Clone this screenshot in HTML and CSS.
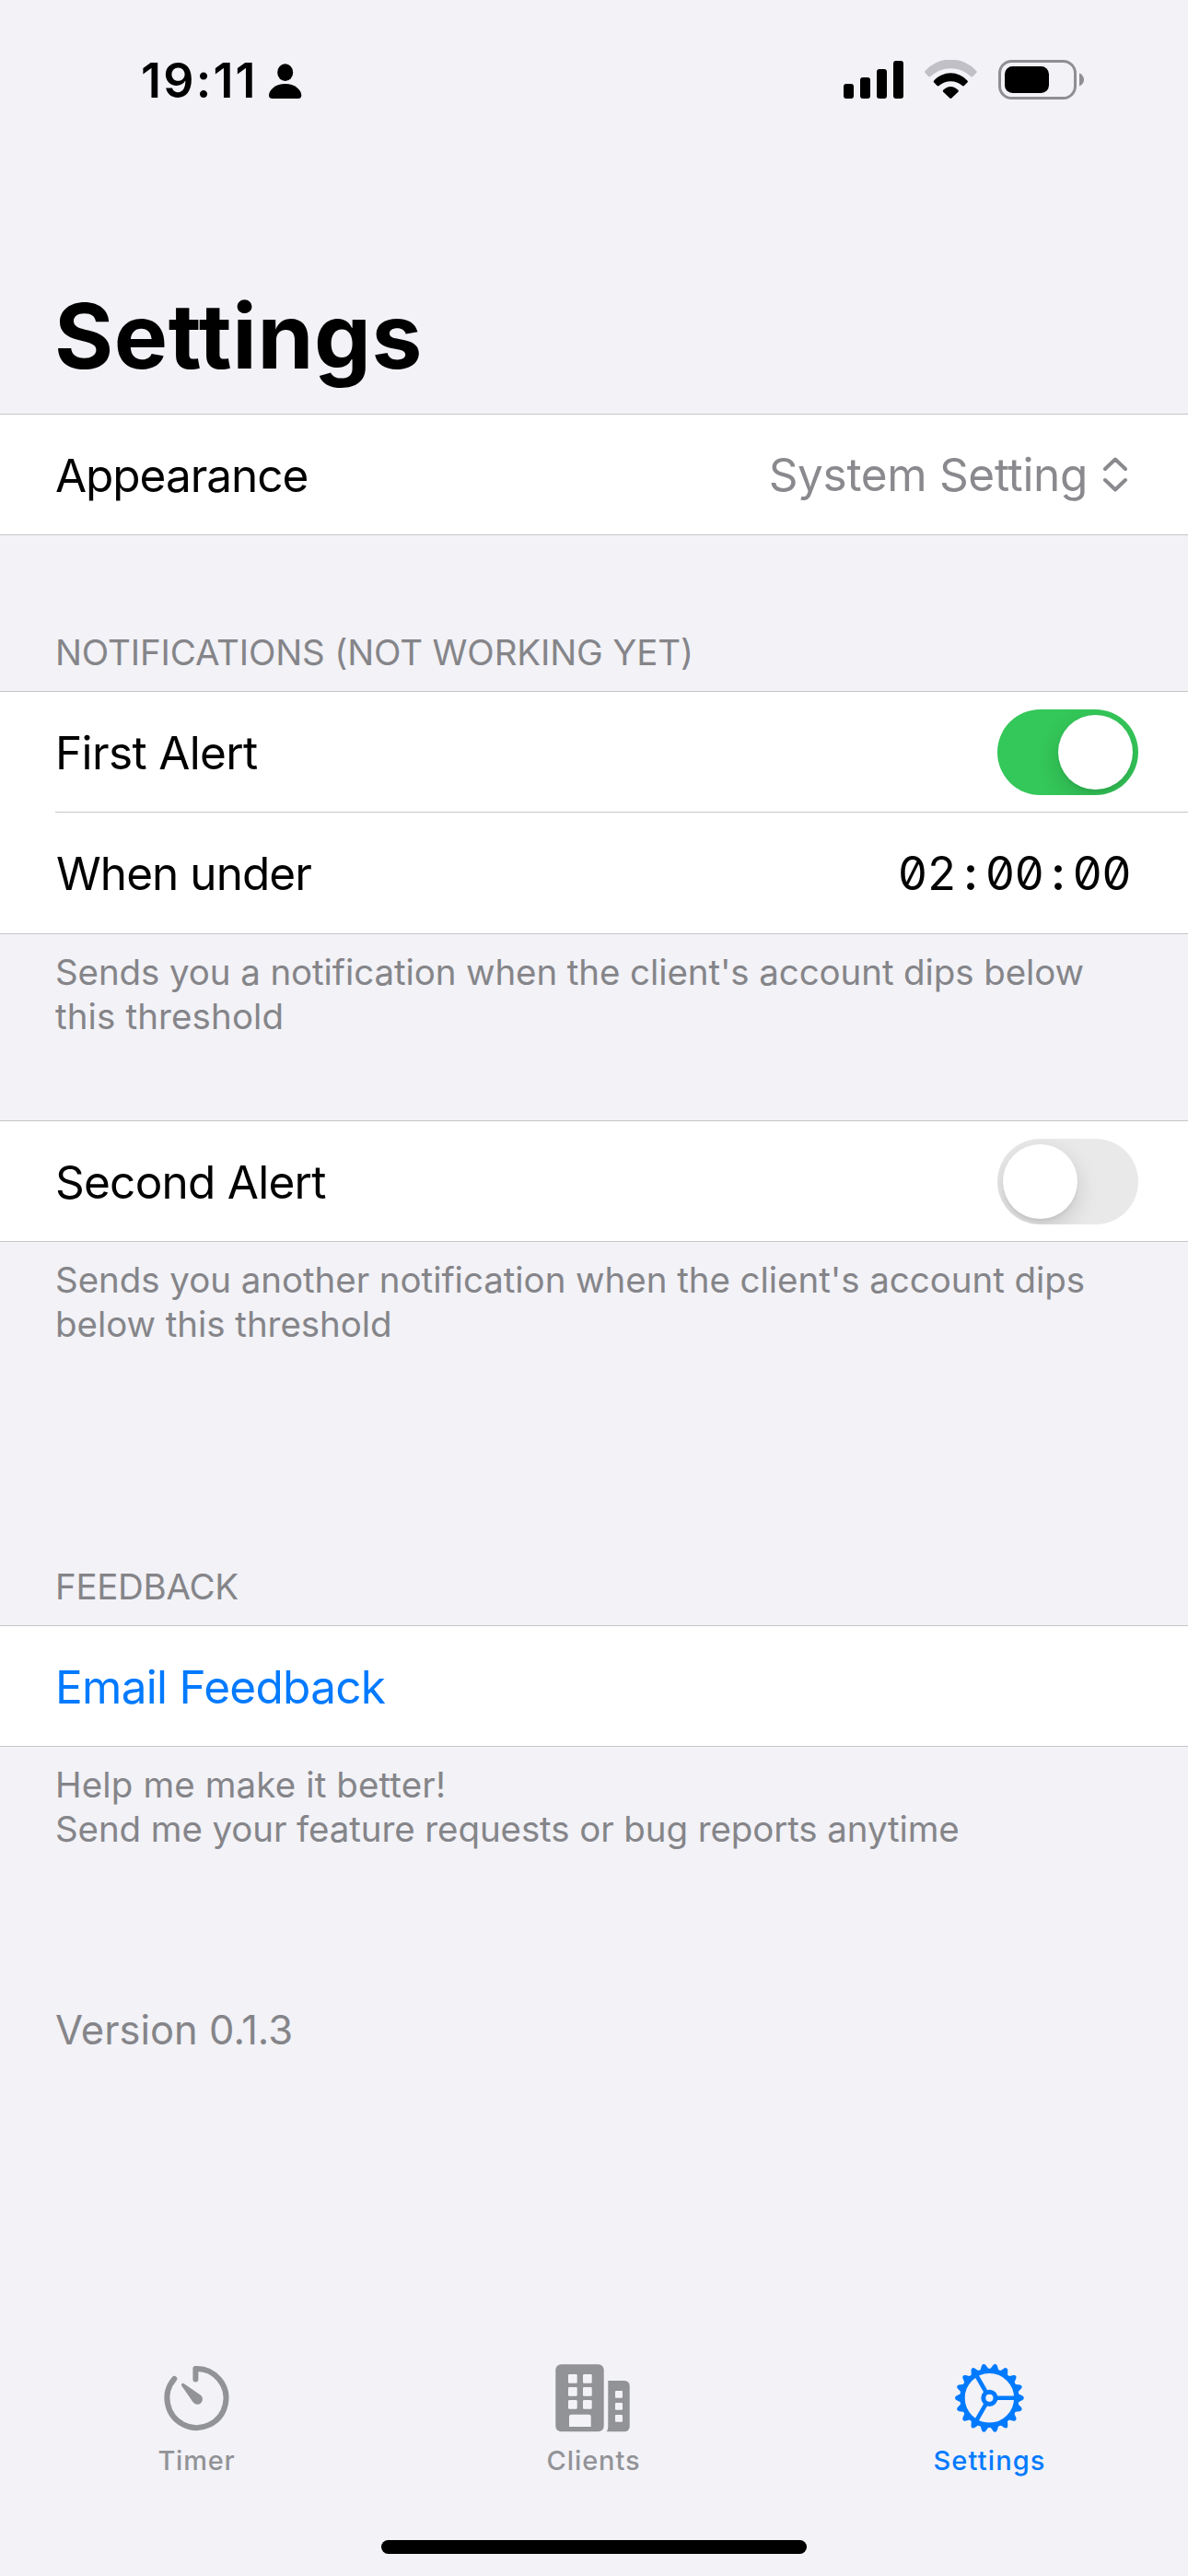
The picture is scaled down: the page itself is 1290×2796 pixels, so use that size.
FILE: index.html
```html
<!DOCTYPE html>
<html lang="en">
<head>
<meta charset="utf-8">
<title>Settings</title>
<link rel="stylesheet" href="styles.css">
</head>
<body>
<div class="screen">
  <header class="status">
    <div class="status-left">
      <span class="clock">19:11</span>
      <svg class="person" width="36" height="38" viewBox="0 0 36 38"><ellipse cx="17.7" cy="9.7" rx="8.5" ry="9.4"/><path d="M17.7 22C28 22 35.3 28.5 35.3 34.5C35.3 37 34 38 31.5 38H4C1.3 38 0 37 0 34.5C0 28.5 7.5 22 17.7 22Z"/></svg>
    </div>
    <div class="status-right">
      <svg width="65" height="43" viewBox="0 0 65 43"><rect x="0" y="26" width="11" height="16" rx="3"/><rect x="18" y="19" width="11" height="23" rx="3"/><rect x="36" y="10" width="11" height="32" rx="3"/><rect x="54" y="1" width="11" height="41" rx="3"/></svg>
      <svg width="57" height="43" viewBox="0 0 57 43"><path fill="#c1c0c6" d="M.5 12A37.3 37.3 0 0 1 56.2 12Q57.3 13 56.2 14L52.4 18Q51.3 18.9 50.2 18A31.9 31.9 0 0 0 6.4 18Q5.3 18.9 4.2 18L.5 14Q-.6 13 .5 12Z"/><path d="M10.2 22.4A24.4 24.4 0 0 1 46.4 22.4Q47.4 23.4 46.4 24.4L43 28Q42 28.8 41 28A19.3 19.3 0 0 0 15.6 28Q14.6 28.8 13.6 28L10.2 24.4Q9.2 23.4 10.2 22.4Z"/><path d="M20.2 32.8C25 27.7 31.6 27.7 36.4 32.8Q37.4 33.8 36.4 34.8L29.3 41.6Q28.3 42.5 27.3 41.6L20.2 34.8Q19.2 33.8 20.2 32.8Z"/></svg>
      <svg width="93" height="43" viewBox="0 0 93 43"><rect x="1.5" y="1.5" width="82" height="40" rx="13" fill="none" stroke="#8f8f92" stroke-width="3"/><rect x="7" y="7" width="48" height="29" rx="8.5"/><path fill="#8f8f92" d="M88 14.5C94.7 17 94.7 26 88 28.5Z"/></svg>
    </div>
  </header>

  <h1 class="title">Settings</h1>

  <main>
    <section class="group">
      <div class="row picker">
        <span class="label appearance">Appearance</span>
        <span class="value">System Setting</span>
        <svg width="26" height="38" viewBox="0 0 26 38" fill="none" stroke="#8a8a8e" stroke-width="4" stroke-linecap="round" stroke-linejoin="round"><path d="M2 13L13 2.5L24 13M2 25L13 35.5L24 25"/></svg>
      </div>
    </section>

    <h2 class="heading notifications">NOTIFICATIONS (NOT WORKING YET)</h2>
    <section class="group">
      <div class="row">
        <span class="label first">First Alert</span>
        <span class="toggle on"></span>
      </div>
      <div class="separator"></div>
      <div class="row duration">
        <span class="label under">When under</span>
        <span class="time">02<span class="colon">:</span>00<span class="colon">:</span>00</span>
      </div>
    </section>
    <p class="note alert-note"><span class="fit">Sends you a notification when the client's account dips below</span><br><span class="open">this threshold</span></p>

    <section class="group">
      <div class="row">
        <span class="label second">Second Alert</span>
        <span class="toggle"></span>
      </div>
    </section>
    <p class="note second-note">Sends you another notification when the client's account dips<br>below this threshold</p>

    <h2 class="heading feedback">FEEDBACK</h2>
    <section class="group">
      <div class="row"><a class="label link">Email Feedback</a></div>
    </section>
    <p class="note"><span class="open">Help me make it better!</span><br><span class="fit">Send me your feature requests or bug reports anytime</span></p>
    <p class="version">Version 0.1.3</p>
  </main>

  <nav class="tabs">
    <div class="tab timer">
      <svg width="90" height="80" viewBox="0 0 90 80"><path d="M42.4 19.5V8A32 32 0 1 1 19.3 19" fill="none" stroke="currentColor" stroke-width="6" stroke-linecap="round" stroke-linejoin="round"/><path fill="currentColor" d="M29.8 24.2L47.6 36.4A5.7 5.7 0 1 1 39.4 44L27.2 26.6A1.8 1.8 0 0 1 29.8 24.2Z"/></svg>
      <span>Timer</span>
    </div>
    <div class="tab clients">
      <svg width="90" height="80" viewBox="0 0 90 80"><rect x="3.3" y="3.3" width="52.4" height="73" rx="6" fill="currentColor"/><path fill="currentColor" d="M60.3 21H78.2A5.5 5.5 0 0 1 83.7 26.5V70.8A5.5 5.5 0 0 1 78.2 76.3H58.7Q60.3 74 60.3 71Z"/><g fill="#f2f2f7"><rect x="17" y="14" width="9.7" height="9.7" rx="1.3"/><rect x="33" y="14" width="9.7" height="9.7" rx="1.3"/><rect x="17" y="28" width="9.7" height="9.7" rx="1.3"/><rect x="33" y="28" width="9.7" height="9.7" rx="1.3"/><rect x="17" y="42" width="9.7" height="9.7" rx="1.3"/><rect x="33" y="42" width="9.7" height="9.7" rx="1.3"/><path d="M18 71V60Q18 57.7 20.3 57.7H39.4Q41.7 57.7 41.7 60V71Z"/><rect x="68" y="32" width="8" height="7.8" rx="1"/><rect x="68" y="45" width="8" height="7.8" rx="1"/><rect x="68" y="58" width="8" height="7.8" rx="1"/></g></svg>
      <span>Clients</span>
    </div>
    <div class="tab active">
      <svg width="90" height="80" viewBox="0 0 90 80"><defs><path id="tooth" d="M30 -5.2L32 -4.2L36 -2.2Q37.4 -1.4 37.4 0Q37.4 1.4 36 2.2L32 4.2L30 5.2Z"/></defs><g transform="translate(44.4 39.8)" fill="currentColor"><g fill="none" stroke="currentColor"><circle r="29.4" stroke-width="5.4"/><circle r="6.6" stroke-width="5"/><path stroke-width="4.6" d="M8 0H29M-4 6.9L-14.5 25.1M-4 -6.9L-14.5 -25.1"/></g><use href="#tooth"/><use href="#tooth" transform="rotate(20)"/><use href="#tooth" transform="rotate(40)"/><use href="#tooth" transform="rotate(60)"/><use href="#tooth" transform="rotate(80)"/><use href="#tooth" transform="rotate(100)"/><use href="#tooth" transform="rotate(120)"/><use href="#tooth" transform="rotate(140)"/><use href="#tooth" transform="rotate(160)"/><use href="#tooth" transform="rotate(180)"/><use href="#tooth" transform="rotate(200)"/><use href="#tooth" transform="rotate(220)"/><use href="#tooth" transform="rotate(240)"/><use href="#tooth" transform="rotate(260)"/><use href="#tooth" transform="rotate(280)"/><use href="#tooth" transform="rotate(300)"/><use href="#tooth" transform="rotate(320)"/><use href="#tooth" transform="rotate(340)"/></g></svg>
      <span>Settings</span>
    </div>
  </nav>
  <div class="home"></div>
</div>
</body>
</html>
```
FILE: styles.css
```css
* { box-sizing: border-box; margin: 0; padding: 0; }
body { background: #f2f2f7; font-family: Inter, "Liberation Sans", sans-serif; color: #000; }
svg { display: block; flex: none; }
.screen { width: 1290px; height: 2796px; display: flex; flex-direction: column; overflow: hidden; white-space: nowrap; }

.status { height: 150px; display: flex; justify-content: space-between; padding: 57px 113px 0 153px; }
.status-left { display: flex; align-items: flex-start; gap: 15px; }
.clock { width: 124px; font-size: 52px; font-weight: 600; line-height: 62px; letter-spacing: 2.2px; }
.person { margin-top: 12px; }
.status-right { display: flex; align-items: flex-start; gap: 23px; padding-top: 8px; }

.title { padding: 155px 0 24px 59px; font-size: 98px; font-weight: 700; line-height: 120px; letter-spacing: .6px; }

.group { background: #fff; border-top: 1px solid #c6c6c8; border-bottom: 1px solid #c6c6c8; }
.row { height: 130px; display: flex; align-items: center; padding: 0 54px 0 60px; }
.row.picker { padding-right: 66px; }
.row.duration { height: 131px; padding-right: 62px; }
.separator { height: 1px; margin-left: 60px; background: #c6c6c8; }
.label { margin-right: auto; padding-top: 1px; font-size: 49.5px; line-height: 60px; }
.appearance { letter-spacing: -1.05px; }
.first { letter-spacing: -.64px; }
.under { letter-spacing: -.95px; margin-left: 1px; }
.second { letter-spacing: -.75px; }
.link { color: #007aff; letter-spacing: -.7px; }
.value { color: #8a8a8e; font-size: 49.5px; line-height: 60px; letter-spacing: -.33px; margin-right: 17px; }
.time { font-size: 50px; line-height: 60px; padding-top: 1px; letter-spacing: -.7px; font-feature-settings: "tnum", "zero"; }
.colon { display: inline-block; width: 31.4px; text-align: center; font-weight: 600; letter-spacing: 0; }

.toggle { position: relative; width: 153px; height: 93px; margin-top: 1px; border-radius: 47px; background: #e9e9ea; overflow: hidden; }
.toggle::after { content: ""; position: absolute; left: 6px; top: 6px; width: 81px; height: 81px; border-radius: 50%; background: #fff; box-shadow: 0 9px 24px rgba(0, 0, 0, .15), 0 3px 3px rgba(0, 0, 0, .05); }
.toggle.on { background: #34c759; }
.toggle.on::after { left: 66px; }

.heading { padding: 0 0 18px 60px; color: #858589; font-size: 38.5px; font-weight: 400; line-height: 48px; }
.notifications { padding-top: 103px; letter-spacing: -.15px; }
.feedback { padding-top: 237px; letter-spacing: -.3px; }
.note { padding: 17px 0 0 60px; color: #858589; font-size: 38.5px; line-height: 48px; letter-spacing: -.05px; }
.alert-note { height: 202px; }
.fit { letter-spacing: -.1px; }
.open { letter-spacing: .12px; }
.version { padding: 167px 0 0 60px; color: #858589; font-size: 43.5px; line-height: 54px; }

.tabs { margin-top: auto; display: grid; grid-template-columns: repeat(3, 1fr); padding-bottom: 68px; }
.tab { display: flex; flex-direction: column; align-items: center; gap: 10px; color: #929397; font-size: 29px; font-weight: 500; line-height: 36px; letter-spacing: 1.15px; }
.timer span { letter-spacing: .8px; margin-right: 3px; }
.clients span { letter-spacing: .9px; margin-right: 1px; }
.active { color: #007aff; }
.active span { margin-right: 1px; }
.home { flex: none; align-self: center; width: 462px; height: 15px; margin-bottom: 24px; border-radius: 8px; background: #000; }
```
